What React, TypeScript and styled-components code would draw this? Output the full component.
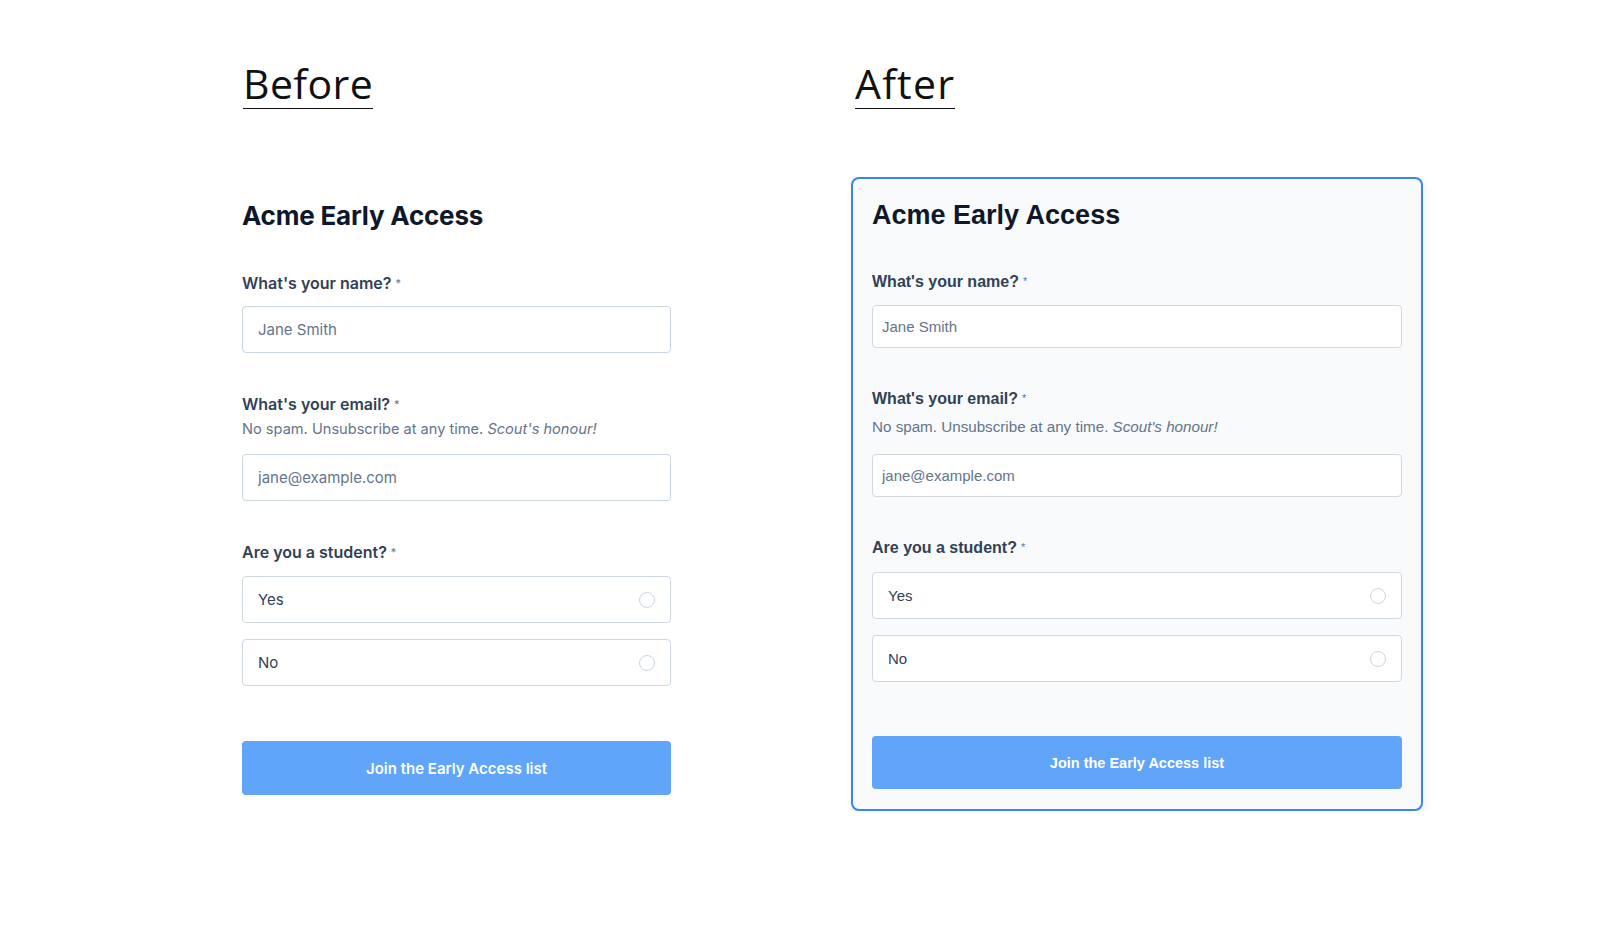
import React from "react";
import styled, { createGlobalStyle, css } from "styled-components";

const GlobalStyle = createGlobalStyle`
  html, body {
    margin: 0;
    background: #fff;
  }
  body {
    font-family: Inter, "Liberation Sans", sans-serif;
  }
  * {
    box-sizing: border-box;
  }
`;

type Variant = { $after?: boolean };

const Page = styled.div`
  display: flex;
  align-items: flex-start;
  gap: 180px;
  padding: 61px 0 0 242px;
`;

const Column = styled.div`
  display: flex;
  flex-direction: column;
  align-items: flex-start;
`;

const Title = styled.h1<Variant>`
  margin: 0 0 0 ${(p) => (p.$after ? 4 : 1)}px;
  padding-bottom: 3px;
  font-family: "Open Sans", sans-serif;
  font-weight: 400;
  font-size: 41px;
  letter-spacing: ${(p) => (p.$after ? 1.2 : 0.4)}px;
  line-height: 44px;
  color: #111;
  border-bottom: 1.5px solid #111;
`;

const PlainForm = styled.form`
  width: 429px;
  margin-top: 91px;
  display: flex;
  flex-direction: column;
`;

const Card = styled.form`
  width: 572px;
  margin-top: 68px;
  padding: 20px 19px 20px;
  display: flex;
  flex-direction: column;
  background: #f8fafc;
  border: 2px solid #3b82f6;
  border-radius: 8px;
  box-shadow: 2px 5px 10px rgba(15, 23, 42, 0.07);
  font-family: "Liberation Sans", Arial, sans-serif;
`;

const Heading = styled.h2<Variant>`
  margin: 0;
  color: #0f172a;
  font-weight: 700;
  line-height: 32px;
  ${(p) =>
    p.$after
      ? css`
          font-size: 27px;
          margin-bottom: 40px;
        `
      : css`
          font-size: 26px;
          margin-bottom: 39px;
          letter-spacing: -0.2px;
        `}
`;

const Field = styled.div<{ $space: number }>`
  display: flex;
  flex-direction: column;
  margin-bottom: ${(p) => p.$space}px;
`;

const Label = styled.label<Variant>`
  color: #334155;
  font-weight: ${(p) => (p.$after ? 700 : 600)};
  font-size: 16px;
  line-height: ${(p) => (p.$after ? 20 : 24)}px;
`;

const Req = styled.span`
  margin-left: 4px;
  font-size: 11px;
  font-weight: 400;
  color: #64748b;
  vertical-align: 2px;
`;

const Help = styled.p<Variant>`
  margin: ${(p) => (p.$after ? "8px 0 0" : "2px 0 0")};
  color: #64748b;
  font-size: ${(p) => (p.$after ? 15.2 : 14.6)}px;
  line-height: ${(p) => (p.$after ? 20 : 22)}px;
  em {
    font-style: italic;
  }
`;

const TextInput = styled.input<Variant & { $gap: number }>`
  margin-top: ${(p) => p.$gap}px;
  width: 100%;
  height: ${(p) => (p.$after ? 43 : 47)}px;
  padding: 0 ${(p) => (p.$after ? 9 : 15)}px;
  background: #fff;
  border: 1px solid ${(p) => (p.$after ? "#d4d8de" : "#cbd5e1")};
  border-radius: 4px;
  font-family: inherit;
  font-size: 15px;
  color: #334155;
  outline: none;
  &::placeholder {
    color: #64748b;
  }
`;

const Options = styled.div<Variant>`
  margin-top: ${(p) => (p.$after ? 14 : 12)}px;
  display: flex;
  flex-direction: column;
  gap: 16px;
`;

const Option = styled.label<Variant>`
  display: flex;
  align-items: center;
  justify-content: space-between;
  height: 47px;
  padding: 0 15px;
  background: #fff;
  border: 1px solid #cfd8e3;
  border-radius: 4px;
  font-size: 15px;
  color: #334155;
  cursor: pointer;
`;

const Radio = styled.input`
  appearance: none;
  margin: 0;
  width: 16px;
  height: 16px;
  border: 1px solid #cbd5e1;
  border-radius: 50%;
  background: #fff;
`;

const Submit = styled.button<Variant>`
  width: 100%;
  height: ${(p) => (p.$after ? 53 : 54)}px;
  border: none;
  border-radius: 4px;
  background: #60a5fa;
  color: #fff;
  font-family: inherit;
  font-weight: ${(p) => (p.$after ? 700 : 600)};
  font-size: ${(p) => (p.$after ? 14.5 : 15)}px;
  cursor: pointer;
`;

const EarlyAccessForm = ({ after }: { after?: boolean }) => {
  const name = after ? "after" : "before";
  return (
    <>
      <Heading $after={after}>Acme Early Access</Heading>
      <Field $space={after ? 40 : 39}>
        <Label $after={after}>
          What's your name?<Req>*</Req>
        </Label>
        <TextInput $after={after} $gap={after ? 13 : 11} placeholder="Jane Smith" />
      </Field>
      <Field $space={after ? 40 : 39}>
        <Label $after={after}>
          What's your email?<Req>*</Req>
        </Label>
        <Help $after={after}>
          No spam. Unsubscribe at any time. <em>Scout's honour!</em>
        </Help>
        <TextInput $after={after} $gap={after ? 17 : 14} placeholder="jane@example.com" />
      </Field>
      <Field $space={after ? 54 : 55}>
        <Label $after={after}>
          Are you a student?<Req>*</Req>
        </Label>
        <Options $after={after}>
          {["Yes", "No"].map((opt) => (
            <Option $after={after} key={opt}>
              {opt}
              <Radio type="radio" name={`student-${name}`} />
            </Option>
          ))}
        </Options>
      </Field>
      <Submit $after={after} type="button">
        Join the Early Access list
      </Submit>
    </>
  );
};

export default function App() {
  return (
    <>
      <GlobalStyle />
      <Page>
        <Column>
          <Title>Before</Title>
          <PlainForm>
            <EarlyAccessForm />
          </PlainForm>
        </Column>
        <Column>
          <Title $after>After</Title>
          <Card>
            <EarlyAccessForm after />
          </Card>
        </Column>
      </Page>
    </>
  );
}
